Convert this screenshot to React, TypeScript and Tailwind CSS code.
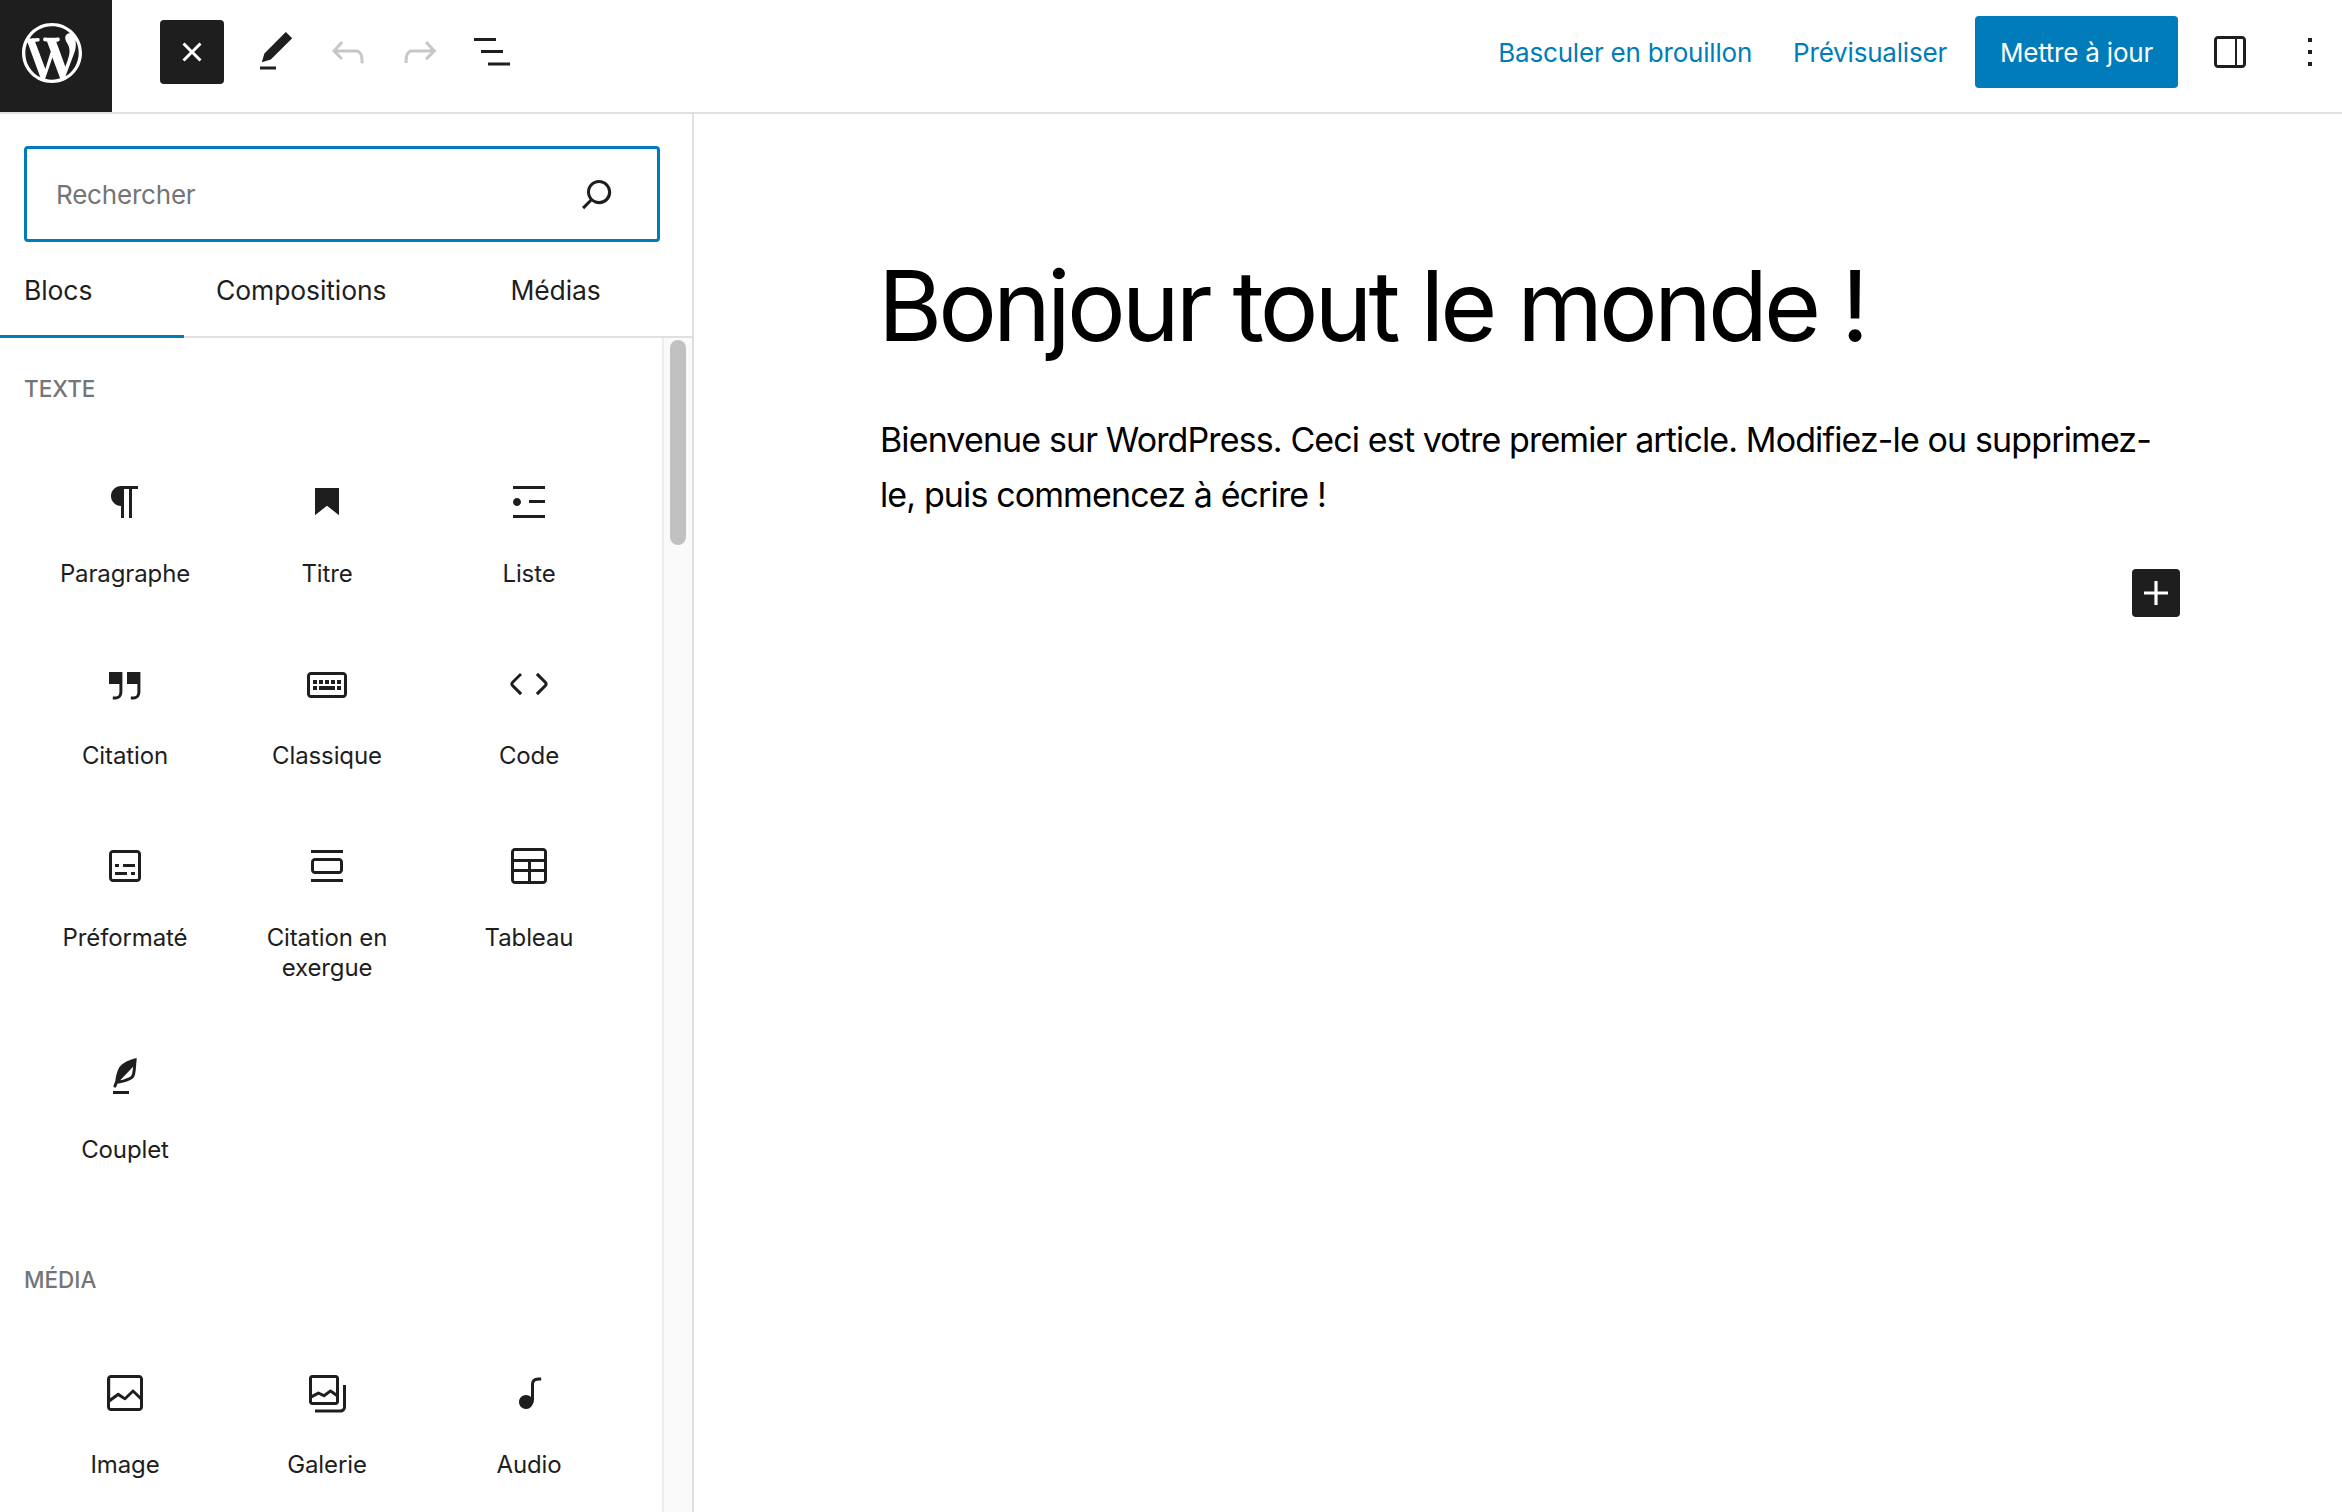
import type { ReactNode } from "react";

const ICONS = {
  close:
    "M12 13.06l3.712 3.713 1.061-1.06L13.061 12l3.712-3.712-1.06-1.06L12 10.938 8.288 7.227l-1.061 1.06L10.939 12l-3.712 3.712 1.06 1.061L12 13.061z",
  pencil: "M20.1 5.1L16.9 2 6.2 12.7l-1.3 4.4 4.5-1.3L20.1 5.1zM4 20.8h8v-1.5H4v1.5z",
  undo: "M18.3 11.7c-.6-.6-1.4-.9-2.3-.9H6.7l2.9-3.3-1.1-1-4.5 5L8.5 16l1-1-2.7-2.7H16c.5 0 .9.2 1.3.5 1 1 1 3.4 1 4.5v.3h1.5v-.2c0-1.5 0-4.3-1.5-5.7z",
  redo: "M15.6 6.5l-1.1 1 2.9 3.3H8c-.9 0-1.7.3-2.3.9-1.4 1.5-1.4 4.2-1.4 5.6v.2h1.5v-.3c0-1.1 0-3.5 1-4.5.3-.3.7-.5 1.3-.5h9.2L14.5 15l1.1 1.1 4.6-4.6-4.6-5z",
  listView: "M3 5h11v1.5H3V5Zm3.5 6h11v1.5h-11V11ZM10 17.25h11v1.5H10v-1.5Z",
  drawer:
    "M18 4H6c-1.1 0-2 .9-2 2v12c0 1.1.9 2 2 2h12c1.1 0 2-.9 2-2V6c0-1.1-.9-2-2-2zM6 18.5c-.3 0-.5-.2-.5-.5V6c0-.3.2-.5.5-.5h8.5v13H6zM18.5 18c0 .3-.2.5-.5.5h-2.5v-13H18c.3 0 .5.2.5.5v12z",
  more: "M13 19h-2v-2h2v2zm0-6h-2v-2h2v2zm0-6h-2V5h2v2z",
  search:
    "M13 5c-3.3 0-6 2.7-6 6 0 1.4.5 2.7 1.3 3.7l-3.8 3.8 1.1 1.1 3.8-3.8c1 .8 2.3 1.3 3.7 1.3 3.3 0 6-2.7 6-6S16.3 5 13 5zm0 10.5c-2.5 0-4.5-2-4.5-4.5s2-4.5 4.5-4.5 4.5 2 4.5 4.5-2 4.5-4.5 4.5z",
  plus: "M18 11.2h-5.2V6h-1.6v5.2H6v1.6h5.2V18h1.6v-5.2H18z",
  paragraph:
    "m9.99609 14v-.2251l.00391.0001v6.225h1.5v-14.5h2.5v14.5h1.5v-14.5h3v-1.5h-8.50391c-2.76142 0-5 2.23858-5 5 0 2.7614 2.23858 5 5 5z",
  heading: "M6 5V18.5911L12 13.8473L18 18.5911V5H6Z",
  list: "M4 4v1.5h16V4H4zm8 8.5h8V11h-8v1.5zM4 20h16v-1.5H4V20zm4-8c0-1.1-.9-2-2-2s-2 .9-2 2 .9 2 2 2 2-.9 2-2z",
  quote:
    "M13 6v6h5.2v4c0 .8-.2 1.4-.5 1.7-.6.6-1.6.6-2.5.5h-.3v1.5h.5c1 0 2.3-.1 3.3-1 .6-.6 1-1.6 1-2.8V6H13zm-9 6h5.2v4c0 .8-.2 1.4-.5 1.7-.6.6-1.6.6-2.5.5h-.3v1.5h.5c1 0 2.3-.1 3.3-1 .6-.6 1-1.6 1-2.8V6H4v6z",
  classic:
    "M20 6H4c-1.1 0-2 .9-2 2v9c0 1.1.9 2 2 2h16c1.1 0 2-.9 2-2V8c0-1.1-.9-2-2-2zm.5 11c0 .3-.2.5-.5.5H4c-.3 0-.5-.2-.5-.5V8c0-.3.2-.5.5-.5h16c.3 0 .5.2.5.5v9zM10 10H8v2h2v-2zm-5 2h2v-2H5v2zm8-2h-2v2h2v-2zm-5 5h8v-2H8v2zm6-3h2v-2h-2v2zm3 0h2v-2h-2v2zm0 3h2v-2h-2v2zM5 15h2v-2H5v2z",
  code: "M20.8 10.7l-4.3-4.3-1.1 1.1 4.3 4.3c.1.1.1.3 0 .4l-4.3 4.3 1.1 1.1 4.3-4.3c.7-.8.7-1.9 0-2.6zM4.2 11.8l4.3-4.3-1-1-4.3 4.3c-.7.7-.7 1.8 0 2.5l4.3 4.3 1.1-1.1-4.3-4.3c-.2-.1-.2-.3-.1-.4z",
  preformatted:
    "M18 4H6c-1.1 0-2 .9-2 2v12c0 1.1.9 2 2 2h12c1.1 0 2-.9 2-2V6c0-1.1-.9-2-2-2zm.5 14c0 .3-.2.5-.5.5H6c-.3 0-.5-.2-.5-.5V6c0-.3.2-.5.5-.5h12c.3 0 .5.2.5.5v12zM7 16.5h6V15H7v1.5zm4-4h6V11h-6v1.5zM9 11H7v1.5h2V11zm6 5.5h2V15h-2v1.5z",
  pullquote:
    "M18 8H6c-1.1 0-2 .9-2 2v4c0 1.1.9 2 2 2h12c1.1 0 2-.9 2-2v-4c0-1.1-.9-2-2-2zm.5 6c0 .3-.2.5-.5.5H6c-.3 0-.5-.2-.5-.5v-4c0-.3.2-.5.5-.5h12c.3 0 .5.2.5.5v4zM4 4v1.5h16V4H4zm0 16h16v-1.5H4V20z",
  table:
    "M19 3H5c-1.1 0-2 .9-2 2v14c0 1.1.9 2 2 2h14c1.1 0 2-.9 2-2V5c0-1.1-.9-2-2-2zM5 4.5h14c.3 0 .5.2.5.5v3.5h-15V5c0-.3.2-.5.5-.5zm8 5.5h6.5v3.5H13V10zm-1.5 3.5h-7V10h7v3.5zm-7 5.5v-4h7v4.5H5c-.3 0-.5-.2-.5-.5zm14.5.5h-6V15h6.5v4c0 .3-.2.5-.5.5z",
  verse:
    "M17.8 2l-.9.3c-.1 0-3.6 1-5.2 2.1C10 5.5 9.3 6.5 8.9 7.1c-.6.9-1.7 4.7-1.7 6.3l-.9 2.3c-.2.4 0 .8.4 1 .1 0 .2.1.3.1.3 0 .6-.2.7-.5l.6-1.5c.3 0 .7-.1 1.2-.2.7-.1 1.4-.3 2.2-.5.8-.2 1.6-.5 2.4-.8.7-.3 1.4-.7 1.9-1.2s.8-1.2 1-1.9c.2-.7.3-1.6.4-2.4.1-.8.1-1.7.2-2.5 0-.8.1-1.5.2-2.1V2zm-1.9 5.6c-.1.8-.2 1.5-.3 2.1-.2.6-.4 1-.6 1.3-.3.3-.8.6-1.4.9-.7.3-1.4.5-2.2.8-.6.2-1.3.3-1.8.4L15 7.5c.3-.3.6-.7 1-1.1 0 .4 0 .8-.1 1.2zM6 20h8v-1.5H6V20z",
  image:
    "M19 3H5c-1.1 0-2 .9-2 2v14c0 1.1.9 2 2 2h14c1.1 0 2-.9 2-2V5c0-1.1-.9-2-2-2zM5 4.5h14c.3 0 .5.2.5.5v8.4l-3-2.9c-.3-.3-.8-.3-1 0L11.9 14 9 12c-.3-.2-.6-.2-.8 0l-3.6 2.6V5c-.1-.3.1-.5.4-.5zm14 15H5c-.3 0-.5-.2-.5-.5v-2.4l4.1-3 3 1.9c.3.2.7.2.9-.1L16 12l3.5 3.4V19c0 .3-.2.5-.5.5z",
  gallery:
    "M16.375 4.5H4.625a.125.125 0 0 0-.125.125v8.254l2.859-1.54a.75.75 0 0 1 .68-.016l2.384 1.142 2.89-2.074a.75.75 0 0 1 .874 0l2.313 1.66V4.625a.125.125 0 0 0-.125-.125Zm.125 9.398-2.75-1.975-2.813 2.02a.75.75 0 0 1-.76.062l-2.444-1.17L4.5 14.583v1.792c0 .069.056.125.125.125h11.75a.125.125 0 0 0 .125-.125v-2.477ZM4.625 3C3.728 3 3 3.728 3 4.625v11.75C3 17.273 3.728 18 4.625 18h11.75c.898 0 1.625-.727 1.625-1.625V4.625C18 3.728 17.273 3 16.375 3H4.625ZM20 8v11c0 .69-.56 1.25-1.249 1.25H6v1.5h12.751A2.749 2.749 0 0 0 21.5 19V8H20Z",
  audio:
    "M17.7 4.3c-1.2 0-2.8 0-3.8 1-.6.6-.9 1.5-.9 2.6V14c-.6-.6-1.5-1-2.5-1C8.6 13 7 14.6 7 16.5S8.6 20 10.5 20c1.5 0 2.8-1 3.3-2.3.5-.8.7-1.8.7-2.5V7.9c0-.7.2-1.2.5-1.6.6-.6 1.8-.6 2.8-.6h.3V4.3h-.4z",
};

const WP_LOGO =
  "M20 10c0-5.51-4.5-10-10-10C4.48 0 0 4.49 0 10c0 5.52 4.48 10 10 10 5.5 0 10-4.48 10-10zM7.78 15.37L4.37 6.22c.55-.02 1.17-.08 1.17-.08.5-.06.44-1.13-.06-1.11 0 0-1.45.11-2.37.11-.18 0-.37 0-.58-.01C4.12 2.69 6.87 1.11 10 1.11c2.33 0 4.45.87 6.05 2.34-.68-.11-1.65.39-1.65 1.58 0 .74.45 1.36.9 2.1.35.61.55 1.36.55 2.46 0 1.49-1.4 5-1.4 5l-3.03-8.37c.54-.02.82-.17.82-.17.5-.05.44-1.25-.06-1.22 0 0-1.44.12-2.38.12-.87 0-2.33-.12-2.33-.12-.5-.03-.56 1.2-.06 1.22l.92.08 1.26 3.41zM17.41 10c.24-.64.74-1.87.43-4.25.7 1.29 1.05 2.71 1.05 4.25 0 3.29-1.73 6.24-4.4 7.78.97-2.59 1.94-5.2 2.92-7.78zM6.1 18.09C3.12 16.65 1.11 13.53 1.11 10c0-1.3.23-2.48.72-3.59C3.25 10.3 4.67 14.2 6.1 18.09zm4.03-6.63l2.58 6.98c-.86.29-1.76.45-2.71.45-.79 0-1.57-.11-2.29-.33.81-2.38 1.62-4.74 2.42-7.1z";

type IconName = keyof typeof ICONS;

const TEXT_BLOCKS: { icon: IconName; label: string }[] = [
  { icon: "paragraph", label: "Paragraphe" },
  { icon: "heading", label: "Titre" },
  { icon: "list", label: "Liste" },
  { icon: "quote", label: "Citation" },
  { icon: "classic", label: "Classique" },
  { icon: "code", label: "Code" },
  { icon: "preformatted", label: "Préformaté" },
  { icon: "pullquote", label: "Citation en exergue" },
  { icon: "table", label: "Tableau" },
  { icon: "verse", label: "Couplet" },
];

const MEDIA_BLOCKS: { icon: IconName; label: string }[] = [
  { icon: "image", label: "Image" },
  { icon: "gallery", label: "Galerie" },
  { icon: "audio", label: "Audio" },
];

function Icon({ name, className = "" }: { name: IconName; className?: string }) {
  return (
    <svg viewBox="0 0 24 24" className={`h-12 w-12 shrink-0 fill-current ${className}`} aria-hidden="true">
      <path d={ICONS[name]} fillRule="evenodd" clipRule="evenodd" />
    </svg>
  );
}

function ToolButton({ name, className = "" }: { name: IconName; className?: string }) {
  return (
    <button type="button" className={`flex h-12 w-12 items-center justify-center ${className}`}>
      <Icon name={name} />
    </button>
  );
}

function BlockSection({ title, blocks, className = "" }: { title: string; blocks: typeof TEXT_BLOCKS; className?: string }) {
  return (
    <section className={className}>
      <h2 className="mb-[74px] h-[30px] text-[22.5px] leading-[30px] font-medium text-[#757575]">{title}</h2>
      <div className="grid grid-cols-[repeat(3,202px)]">
        {blocks.map((block) => (
          <button key={block.label} type="button" className="flex flex-col items-center pb-[71px] text-[#1e1e1e]">
            <Icon name={block.icon} />
            <span className="mt-[33px] max-w-[170px] text-center text-[24px] leading-[30px] tracking-[-0.12px]">
              {block.label}
            </span>
          </button>
        ))}
      </div>
    </section>
  );
}

function Tab({ children, active, className = "" }: { children: ReactNode; active?: boolean; className?: string }) {
  return (
    <button
      type="button"
      className={`flex h-[96px] shrink-0 items-center border-b-[3px] pt-[5px] text-[26.5px] tracking-[-0.1px] text-[#1e1e1e] ${active ? "border-[#007cba]" : "border-transparent"} ${className}`}
    >
      {children}
    </button>
  );
}

export default function App() {
  return (
    <div className="flex h-screen flex-col overflow-hidden bg-white font-['Inter',sans-serif] text-[#1e1e1e]">
      <header className="flex h-[114px] shrink-0 items-start border-b-2 border-[#e0e0e0]">
        <a className="flex h-[112px] w-[112px] items-center justify-center bg-[#1e1e1e] pr-2 pb-[6px] text-white">
          <svg viewBox="0 0 20 20" className="h-[60px] w-[60px] fill-current" aria-hidden="true">
            <path d={WP_LOGO} />
          </svg>
        </a>
        <div className="ml-12 flex h-[104px] items-center">
          <button type="button" className="flex h-16 w-16 items-center justify-center rounded bg-[#1e1e1e] text-white">
            <Icon name="close" />
          </button>
          <div className="ml-[28px] flex items-center gap-6">
            <ToolButton name="pencil" />
            <ToolButton name="undo" className="text-[#c7c7c7]" />
            <ToolButton name="redo" className="text-[#c7c7c7]" />
            <ToolButton name="listView" />
          </div>
        </div>
        <div className="ml-auto flex h-[104px] items-center pr-2 text-[26px] tracking-[-0.2px]">
          <button type="button" className="text-[#007cba]">
            Basculer en brouillon
          </button>
          <button type="button" className="ml-[41px] text-[#007cba]">
            Prévisualiser
          </button>
          <button type="button" className="ml-[28px] h-[72px] w-[203px] rounded bg-[#007cba] text-white">
            Mettre à jour
          </button>
          <ToolButton name="drawer" className="ml-[28px]" />
          <ToolButton name="more" className="ml-[32px]" />
        </div>
      </header>

      <div className="flex min-h-0 flex-1">
        <aside className="flex w-[694px] shrink-0 flex-col border-r-2 border-[#e0e0e0]">
          <div className="px-6 pt-8">
            <label className="flex h-[96px] w-[636px] items-center rounded border-[3px] border-[#007cba] pr-[36px] pl-[29px]">
              <input
                placeholder="Rechercher"
                className="min-w-0 flex-1 text-[26px] tracking-[-0.2px] outline-none placeholder:text-[#757575]"
              />
              <Icon name="search" />
            </label>
          </div>
          <div className="flex h-[96px] shrink-0 border-b-2 border-[#e0e0e0]">
            <Tab active className="w-[184px] pl-6">
              Blocs
            </Tab>
            <Tab className="ml-8">Compositions</Tab>
            <Tab className="ml-[124px]">Médias</Tab>
          </div>
          <div className="flex min-h-0 flex-1">
            <div className="min-w-0 flex-1 overflow-hidden px-6 pt-[36px]">
              <BlockSection title="TEXTE" blocks={TEXT_BLOCKS} />
              <BlockSection title="MÉDIA" blocks={MEDIA_BLOCKS} className="mt-[29px]" />
            </div>
            <div className="w-[30px] shrink-0 border-l-2 border-[#ececec] bg-[#fafafa] pt-[2px] pl-[6px]">
              <div className="h-[205px] w-[16px] rounded-full bg-[#c1c1c1]" />
            </div>
          </div>
        </aside>

        <main className="min-w-0 flex-1 pt-[132px] pl-[186px] text-black">
          <div className="w-[1300px]">
            <h1 className="-ml-[2px] text-[98px] leading-[120px] font-normal tracking-[-3.9px]">Bonjour tout le monde !</h1>
            <p className="mt-[46px] text-[34px] leading-[55px] tracking-[-0.88px]">
              Bienvenue sur WordPress. Ceci est votre premier article. Modifiez-le ou supprimez-le, puis commencez à écrire !
            </p>
            <div className="mt-[47px] flex justify-end">
              <button type="button" className="flex h-12 w-12 items-center justify-center rounded bg-[#1e1e1e] text-white">
                <Icon name="plus" />
              </button>
            </div>
          </div>
        </main>
      </div>
    </div>
  );
}
